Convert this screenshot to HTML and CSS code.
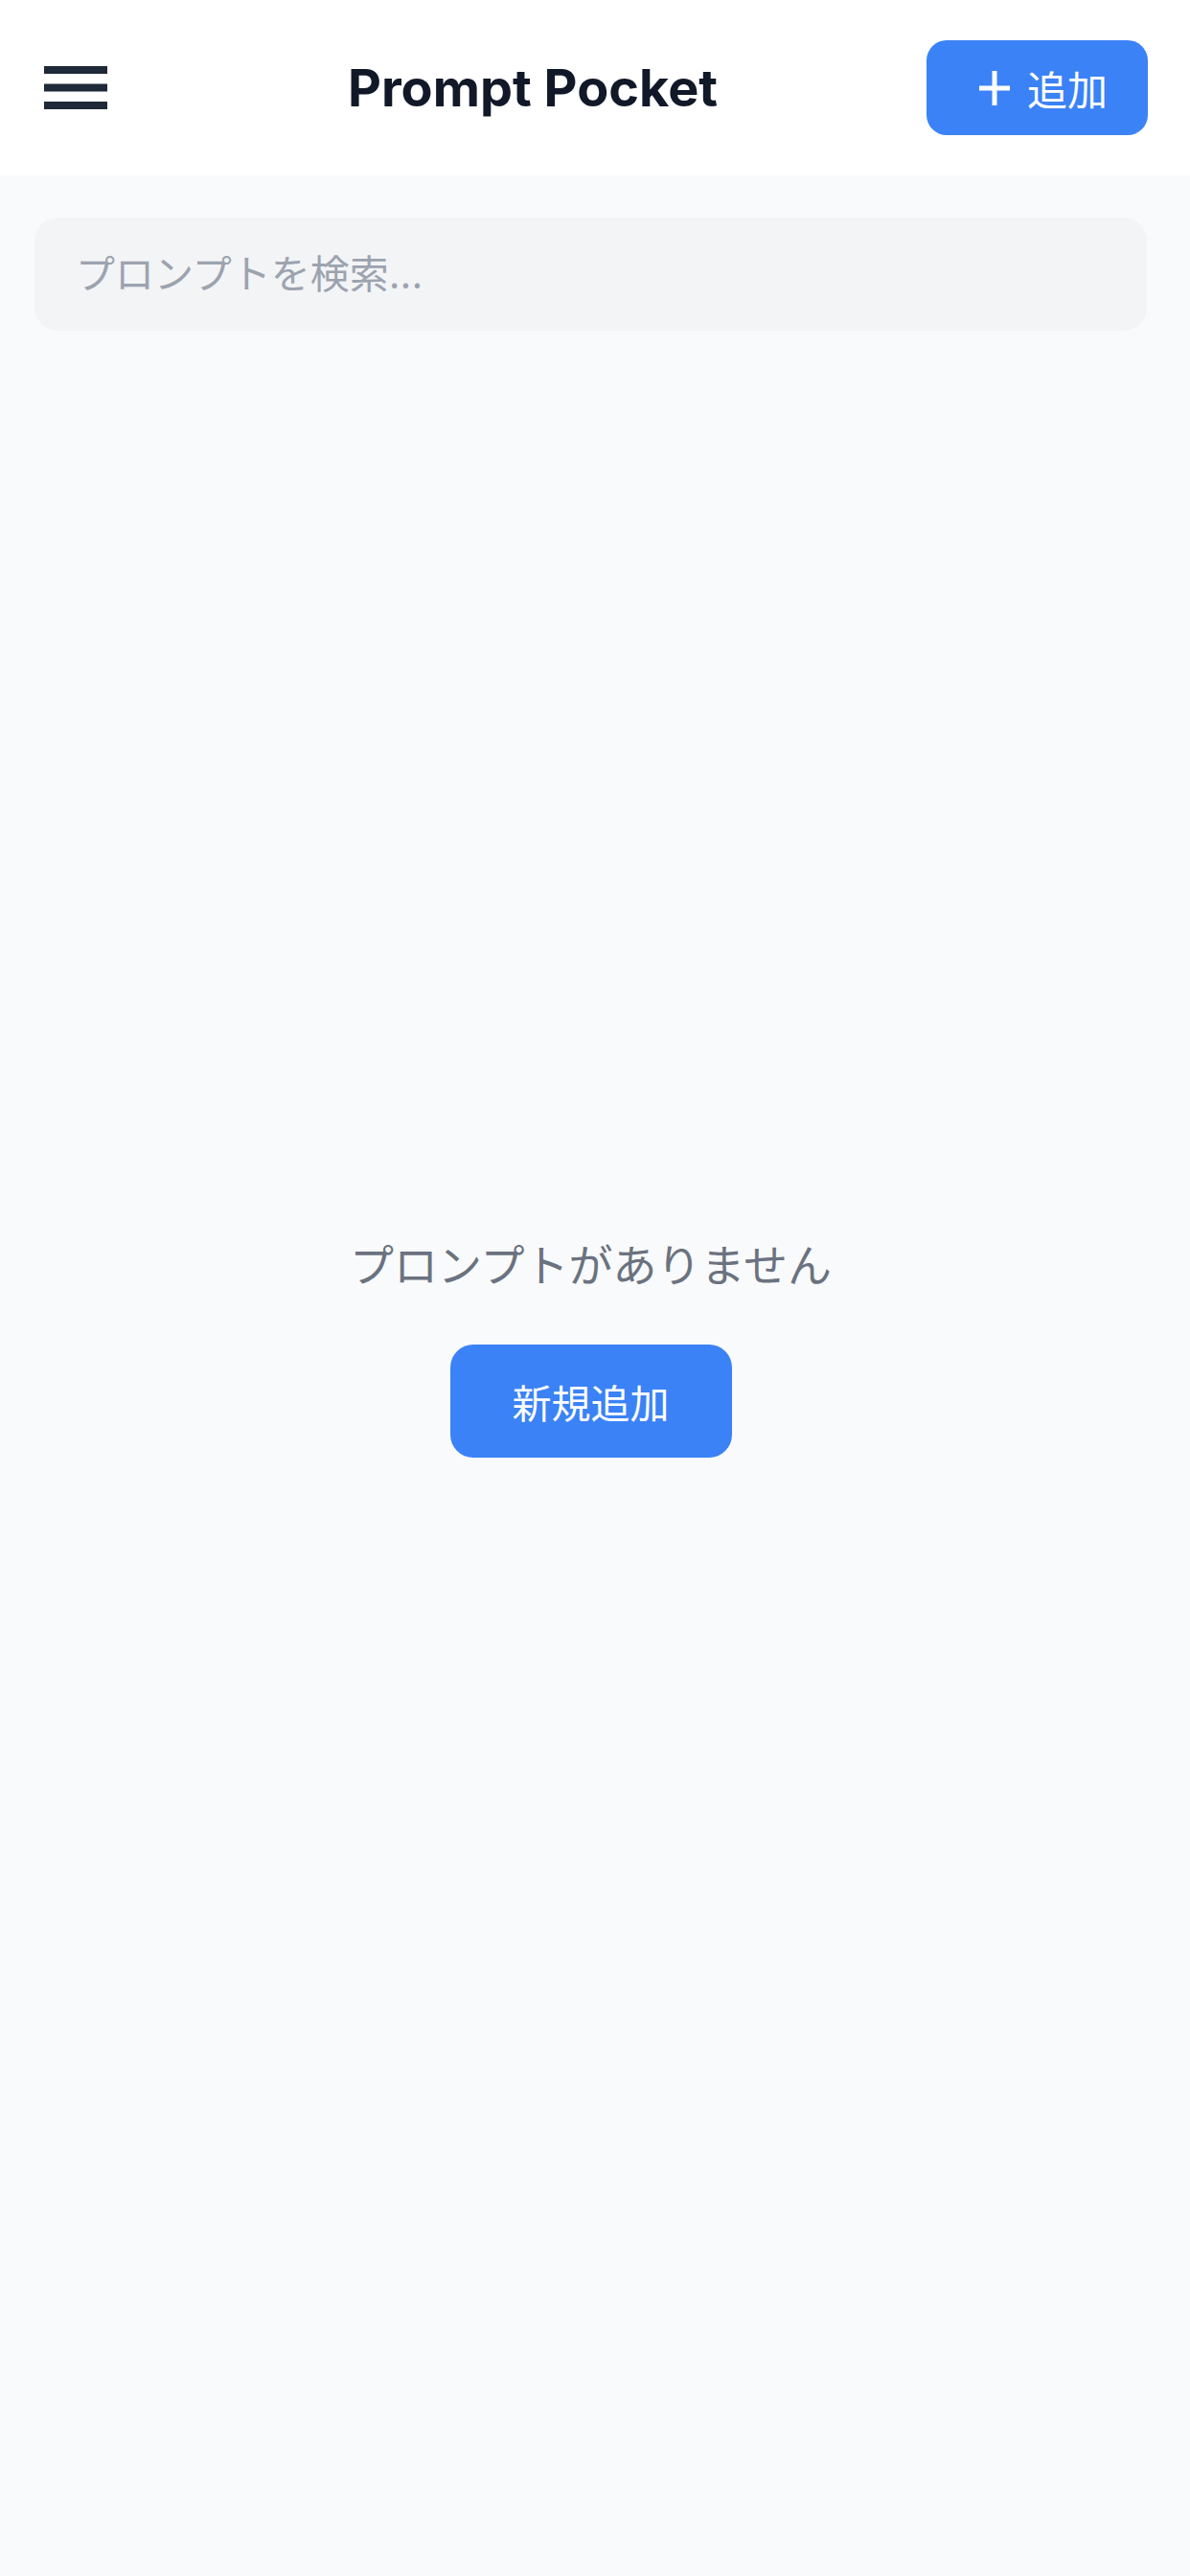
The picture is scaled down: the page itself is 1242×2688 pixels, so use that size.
FILE: index.html
```html
<!DOCTYPE html>
<html lang="ja">
<head>
    <meta charset="UTF-8">
    <meta name="viewport" content="width=device-width, initial-scale=1.0">
    <title>Prompt Pocket</title>
    <link rel="stylesheet" href="styles.css">
</head>
<body>

    <!-- ヘッダー -->
    <header class="topbar">
        <button class="menu-btn" type="button" aria-label="メニュー">
            <svg width="66" height="45" viewBox="0 0 66 45">
                <rect x="0" y="0" width="66" height="8" fill="#1f2937"/>
                <rect x="0" y="18.5" width="66" height="8" fill="#1f2937"/>
                <rect x="0" y="37" width="66" height="8" fill="#1f2937"/>
            </svg>
        </button>
        <h1 class="title">Prompt Pocket</h1>
        <button class="add-btn" type="button">
            <svg width="32" height="36" viewBox="0 0 32 36">
                <line x1="16" y1="0" x2="16" y2="36" stroke="#fff" stroke-width="5"/>
                <line x1="0" y1="18" x2="32" y2="18" stroke="#fff" stroke-width="5"/>
            </svg>
            <span>追加</span>
        </button>
    </header>

    <main class="content">
        <!-- 検索 -->
        <input class="search" type="text" placeholder="プロンプトを検索...">

        <!-- 空の状態 -->
        <div class="empty">
            <p class="empty-text">プロンプトがありません</p>
            <button class="new-btn" type="button">新規追加</button>
        </div>
    </main>

</body>
</html>
```

FILE: styles.css
```css
body {
    margin: 0;
    background-color: #f9fafb;
    font-family: Inter, "Noto Sans CJK JP", sans-serif;
    color: #111827;
}

button {
    font-family: inherit;
    cursor: pointer;
}

.topbar {
    height: 183px;
    box-sizing: border-box;
    background-color: #ffffff;
    display: flex;
    align-items: center;
    padding: 0 44px 0 46px;
}

.menu-btn {
    width: 99px;
    padding: 0;
    border: none;
    background: none;
    display: flex;
    align-items: center;
}

.title {
    flex: 1;
    margin: 0;
    text-align: center;
    font-size: 54px;
    font-weight: 700;
    color: #111827;
}

.add-btn {
    width: 231px;
    height: 99px;
    border: none;
    border-radius: 21px;
    background-color: #3b82f6;
    color: #ffffff;
    font-size: 42px;
    font-weight: 400;
    display: flex;
    align-items: center;
    padding: 0 0 0 55px;
    gap: 18px;
}

.content {
    padding: 44px 45px 0 36px;
}

.search {
    display: block;
    width: 100%;
    height: 118px;
    box-sizing: border-box;
    border: none;
    border-radius: 24px;
    background-color: #f3f4f6;
    padding: 0 43px;
    font-family: inherit;
    font-size: 41px;
    color: #111827;
    outline: none;
}

.search::placeholder {
    color: #9ca3af;
}

.empty {
    margin-top: 939px;
    display: flex;
    flex-direction: column;
    align-items: center;
}

.empty-text {
    margin: 0;
    font-size: 46px;
    line-height: 72px;
    color: #6b7280;
}

.new-btn {
    margin-top: 47px;
    width: 294px;
    height: 118px;
    border: none;
    border-radius: 24px;
    background-color: #3b82f6;
    color: #ffffff;
    font-size: 41px;
    font-weight: 400;
}
```
